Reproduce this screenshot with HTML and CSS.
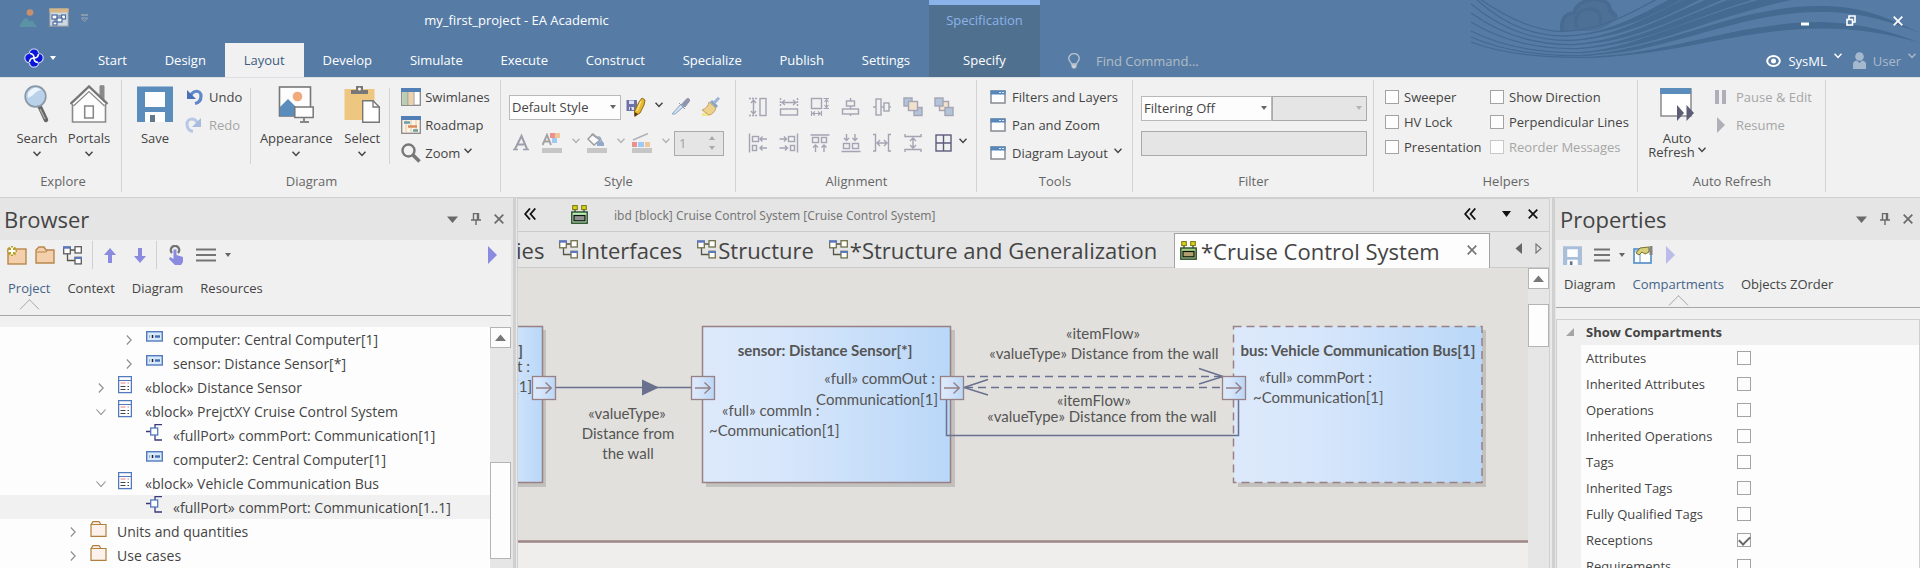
FILE: index.html
```html
<!DOCTYPE html>
<html lang="en">
<head>
<meta charset="utf-8">
<title>my_first_project - EA Academic</title>
<link rel="stylesheet" href="styles.css">
</head>
<body>
<svg class="defs" width="0" height="0" aria-hidden="true">
  <defs>
    <linearGradient id="nodeFill"><stop offset="0" stop-color="#dce9fb"/><stop offset="0.3" stop-color="#d8e7fb"/><stop offset="1" stop-color="#b9d7f8"/></linearGradient>
    <symbol id="chev" viewBox="0 0 8 6"><path d="M0.5 0.8 4 4.4 7.5 0.8" fill="none" stroke="currentColor" stroke-width="1.5"/></symbol>
    <symbol id="tri" viewBox="0 0 6 4"><path d="M0 0H6L3 4Z" fill="currentColor"/></symbol>
    <symbol id="bigtri" viewBox="0 0 11 7"><path d="M0 0.5H11L5.500 7Z" fill="currentColor"/></symbol>
    <symbol id="pin" viewBox="0 0 10 12"><path d="M2.500 0.500H7.500V6.500M2.500 0V6.500M6.500 0V6.500M0 7H10M5 7V12" fill="none" stroke="currentColor" stroke-width="1.400"/></symbol>
    <symbol id="cross" viewBox="0 0 10 10"><path d="M0.700 0.700 9.300 9.300M9.300 0.700 0.700 9.300" fill="none" stroke="currentColor" stroke-width="1.700"/></symbol>
    <symbol id="window" viewBox="0 0 16 14"><rect x="1" y="1" width="14" height="12" fill="#fcfdfe" stroke="#858b93" stroke-width="1.500"/><rect x="0.500" y="0.500" width="15" height="4" fill="#5788bb"/><path d="M9 2.500h2M12 2.500h2" stroke="#dce8f4"/></symbol>
    <symbol id="expand" viewBox="0 0 6 10"><path d="M0.800 0.500 5.200 5 0.800 9.500" fill="none" stroke="#8c8c8c" stroke-width="1.100"/></symbol>
    <symbol id="collapse" viewBox="0 0 10 6"><path d="M0.500 0.500 5 5.500 9.500 0.500" fill="none" stroke="#8c8c8c" stroke-width="1.100"/></symbol>
    <symbol id="part" viewBox="0 0 17 11"><rect x="0.700" y="0.700" width="15.600" height="9.300" fill="#d9e9fc" stroke="#5379bd" stroke-width="1.400"/><path d="M3.500 4v3" stroke="#98b4de"/><path d="M6.500 4v3" stroke="#222" stroke-width="1.500"/><path d="M9 5.500h5" stroke="#456db0" stroke-width="2.400"/></symbol>
    <symbol id="block" viewBox="0 0 14 18"><rect x="0.600" y="0.600" width="12.800" height="16" fill="#fff" stroke="#5379bd" stroke-width="1.300"/><path d="M1 4.500h12" stroke="#5379bd"/><path d="M2.500 7h5M9.500 7h1.500" stroke="#e88080" stroke-width="1.200"/><path d="M2.500 10.500h5M9.500 10.500h1.500M2.500 13.500h5M9.500 13.500h1.500" stroke="#444" stroke-width="1.200"/></symbol>
    <symbol id="port" viewBox="0 0 17 17"><path d="M16 0.700H9V16H16M0 7.500H5" fill="none" stroke="#38387a" stroke-width="1.300"/><rect x="4.700" y="4" width="7" height="7" fill="#fff" stroke="#5379bd" stroke-width="1.300"/></symbol>
    <symbol id="folder" viewBox="0 0 17 16"><path d="M1 15.300V3.500L3 0.700H9L11 3.500H16V15.300Z" fill="#fdf1ec" stroke="#b0803c" stroke-width="1.200"/><path d="M1 3.500H11" stroke="#b0803c"/></symbol>
    <symbol id="bigfolder" viewBox="0 0 20 18"><path d="M1 17V4L4 1H9L11 4H19V17Z" fill="#f3cfab" stroke="#b8864c" stroke-width="1.400"/><path d="M2 6H11L13 4" fill="none" stroke="#b8864c"/></symbol>
    <symbol id="struct" viewBox="0 0 19 19"><path d="M7 4H12M4.500 8V14.500H12" fill="none" stroke="#555548" stroke-width="1.300"/><g fill="#fff" stroke="var(--line)" stroke-width="1.300"><rect x="0.700" y="1.200" width="6.600" height="6.600"/><rect x="12" y="0.700" width="6.300" height="6.300"/><rect x="12" y="11.300" width="6.300" height="6.600"/></g><path d="M0 1.500H8" stroke="#5a78c0" stroke-width="2.400"/><path d="M11.500 12H19" stroke="#5a78c0" stroke-width="2"/></symbol>
    <symbol id="robot" viewBox="0 0 17 19"><path d="M4 4V11M13 4V8" stroke="#333" stroke-width="1.200"/><rect x="0.800" y="7" width="15.400" height="11.200" fill="var(--body)" stroke="#2c4a2c" stroke-width="1.400"/><rect x="3" y="10.500" width="11" height="5.300" fill="var(--core)" stroke="#111" stroke-width="1.200"/><rect x="1.700" y="0.600" width="4.600" height="4" fill="#d8d414" stroke="#77750a"/><rect x="10.700" y="0.600" width="4.600" height="4" fill="#d8d414" stroke="#77750a"/></symbol>
    <symbol id="dblleft" viewBox="0 0 12 12"><path d="M6 0.500 1.200 6 6 11.500M11.300 0.500 6.500 6 11.300 11.500" fill="none" stroke="#111" stroke-width="1.800"/></symbol>
    <symbol id="lines" viewBox="0 0 20 14" preserveAspectRatio="none"><path d="M0 1.500H20M0 7H20M0 12.500H20" stroke="#747474" stroke-width="2.200"/></symbol>
    <symbol id="play" viewBox="0 0 9 18"><path d="M0 0 9 9 0 18Z" fill="currentColor"/></symbol>
    <symbol id="floppy" viewBox="0 0 36 36"><path d="M0 0.500H36V36H0Z" fill="currentColor"/><path d="M8 6H28V21H8ZM8 26H28V36H8Z" fill="#fdfdfd"/><path d="M13 29H18V36H13Z" fill="#61798a"/></symbol>
    <symbol id="port-box" viewBox="0 0 26 26"><rect x="1.500" y="1.500" width="23" height="23" fill="url(#nodeFill)" stroke="#988084" stroke-width="1.300"/><path d="M5 13H20M14.500 7.500 20.300 13 14.500 18.500" fill="none" stroke="#988084" stroke-width="1.400"/></symbol>
  </defs>
</svg>

<header class="titlebar">
  <svg class="waves" viewBox="0 0 450 64" aria-hidden="true">
    <path d="M90 31C89 18 94 12 103 12C106-6 140-6 141 6C143 12 147 11 148 17C142 24 130 31 118 31Z" fill="#4d7097"/>
    <g fill="none" stroke="#486b92" stroke-width="3.500"><path d="M92 31C91 19 96 13 104 13C108-3 134-4 139 6L140 11L146 17"/><path d="M107 28C101 12 118 5 127 11Q133 16 130 24" stroke-width="3"/></g>
    <g fill="none" stroke="#456a91" stroke-width="1.300">
      <path d="M10 -1C40 20 66 31 92 31.500C128 31 158 15 187 -1"/>
      <path d="M6 -1C40 30 70 36 96 36C134 35 165 18 205 -1"/>
      <path d="M1 4C40 36 74 40.500 100 40.500C142 39 180 17 215 -1"/>
      <path d="M1 13C40 41 78 45 104 44.500C150 42 190 20 240 -1"/>
      <path d="M1 22C40 46 82 49 108 48.500C158 46 210 18 262 -1"/>
      <path d="M1 31C40 51 86 53 112 52.500C162 50 225 16 300 -1"/>
      <path d="M1 37C40 54 86 56 112 55.500C170 52 230 26 290 14"/>
      <path d="M1 42C40 57 86 58 120 57.300C180 55 240 36 290 28"/>
    </g>
    <g fill="#456a91">
      <path d="M96 36C134 35 165 18 200 -1H212C175 20 140 35 96 36Z"/>
      <path d="M100 40.500C142 39 180 17 217 -1H231C190 20 145 40 100 40.500Z"/>
      <path d="M104 44.500C150 42 190 20 237 -1H254C200 22 155 44 104 44.500Z"/>
      <path d="M108 48.500C158 46 210 18 264 -1H285C220 18 170 47 108 48.500Z"/>
      <path d="M112 52.500C162 50 225 16 292 -1H326C235 18 180 51 112 52.500Z"/>
      <path d="M112 55.500C190 52 260 6 350 6C390 6 415 16 450 33C415 20 390 12 350 12C265 12 195 55 112 55.500Z"/>
      <path d="M120 57.300C190 56 270 22 350 22C390 23 420 31 450 43C420 34 390 28.500 350 28.500C270 29 200 57 120 57.300Z"/>
    </g>
  </svg>
  <div class="titlerow">
    <div class="quick">
      <svg width="18" height="18" viewBox="0 0 18 18"><circle cx="11" cy="3.500" r="3.300" fill="#c98f6c"/><path d="M0 18C3 12 5 9 8 9L11 13L13 11L18 18Z" fill="#5b93a4"/></svg>
      <svg width="20" height="19" viewBox="0 0 20 19"><rect x="0.700" y="0.700" width="18.600" height="17.600" fill="#ccd8e4" stroke="#8b949e" stroke-width="1.200"/><path d="M0.500 0.500h19v4h-19z" fill="#d6b684"/><g fill="#fff" stroke="#4a6c9c" stroke-width="1.200"><path d="M6 10v5M8 8h8"/><rect x="3" y="7" width="5" height="4"/><rect x="12.500" y="7" width="4" height="4"/><rect x="8" y="10" width="5" height="4"/><rect x="4" y="14" width="4" height="3"/></g></svg>
      <svg width="7" height="8" viewBox="0 0 7 8"><path d="M0 1h7" stroke="#9aa5ae" stroke-width="1.500"/><path d="M0.500 4h6L3.500 7.500z" fill="none" stroke="#9aa5ae"/></svg>
    </div>
    <h1 class="apptitle">my_first_project - EA Academic</h1>
  </div>
  <div class="context"><span class="ctxlabel">Specification</span><button class="tab">Specify</button></div>
  <div class="winbtns">
    <button aria-label="Minimize"><svg width="8" height="10" viewBox="0 0 8 10"><path d="M0 8h8" stroke="#fff" stroke-width="3"/></svg></button>
    <button aria-label="Restore"><svg width="10" height="11" viewBox="0 0 10 11"><path d="M3 4V1H9V7H7" fill="none" stroke="#fff" stroke-width="1.600"/><rect x="1" y="4.500" width="5.500" height="5.500" fill="none" stroke="#fff" stroke-width="1.600"/></svg></button>
    <button aria-label="Close"><svg width="10" height="10"><use href="#cross"/></svg></button>
  </div>
  <button class="appmenu" aria-label="Application menu">
    <svg width="20" height="20" viewBox="0 0 20 20"><g fill="#0a16d8" stroke="#c4ccf4" stroke-width="1.200"><circle cx="10" cy="5.500" r="4.700"/><circle cx="10" cy="14.500" r="4.700"/><circle cx="5.500" cy="10" r="4.700"/><circle cx="14.500" cy="10" r="4.700"/></g><circle cx="10" cy="10" r="6.500" fill="#0a16d8"/><path d="M6 5.500C10 6 10 8 10 10C10 12 10 14 14 14.500M14.500 6C14 10 12 10 10 10C8 10 6 10 5.500 14" fill="none" stroke="#fff" stroke-width="1.700"/></svg>
    <svg width="6" height="4"><use href="#tri"/></svg>
  </button>
  <nav class="tabs">
    <button class="tab">Start</button><button class="tab">Design</button><button class="tab active">Layout</button><button class="tab">Develop</button><button class="tab">Simulate</button><button class="tab">Execute</button><button class="tab">Construct</button><button class="tab">Specialize</button><button class="tab">Publish</button><button class="tab">Settings</button>
  </nav>
  <div class="cmdrow">
    <svg width="12" height="16" viewBox="0 0 12 16"><path d="M3.500 11C3.500 9 0.800 8.500 0.800 5.500A5.200 4.900 0 0 1 11.200 5.500C11.200 8.500 8.500 9 8.500 11Z" fill="none" stroke="#b9c3cd" stroke-width="1.400"/><path d="M3.500 11.500h5v2.500l-1.500 1.500h-2l-1.500-1.500z" fill="#c9ccd0"/></svg>
    <input class="find" type="text" placeholder="Find Command..." aria-label="Find Command">
    <button class="persp"><svg width="15" height="12" viewBox="0 0 15 12"><ellipse cx="7.500" cy="6" rx="6.300" ry="4.900" fill="none" stroke="#fff" stroke-width="2"/><circle cx="7.500" cy="6" r="2.500" fill="#fff"/></svg>SysML<svg class="up" width="8" height="6"><use href="#chev"/></svg></button>
    <button class="persp dim"><svg width="13" height="17" viewBox="0 0 13 17"><circle cx="6.500" cy="4.500" r="4.300" fill="#a5b9ce"/><path d="M0 17V12Q0 9 4 8.500L6.500 11L9 8.500Q13 9 13 12V17Z" fill="#a5b9ce"/></svg>User<svg class="up" width="8" height="6"><use href="#chev"/></svg></button>
  </div>
</header>

<section class="ribbon">
  <div class="group g-explore">
    <div class="body">
      <button class="big"><svg width="26" height="38" viewBox="0 0 26 38"><path d="M15 20 22 35" stroke="#666" stroke-width="4.500" stroke-linecap="round"/><path d="M16 24 21 34" stroke="#aaa" stroke-width="1.500"/><circle cx="11.500" cy="11.500" r="10.300" fill="#b9d2ea" stroke="#8b98a6" stroke-width="1.700"/><path d="M4 13A8 8 0 0 1 17 5C11 6 11 10 4 13Z" fill="#edf5fc"/></svg>Search<svg width="8" height="6"><use href="#chev"/></svg></button>
      <button class="big"><svg width="38" height="38" viewBox="0 0 38 38"><path d="M30 13V0.800H34V17" fill="#8a8a8a" stroke="#8a8a8a"/><path d="M2.500 19 19 3.500 35.500 19V37H2.500Z" fill="#fdfdfd"/><path d="M2.500 19V37H35.500V19" fill="none" stroke="#8a8a8a" stroke-width="1.600"/><path d="M0.500 19 19 1.500 37.500 19" fill="none" stroke="#777" stroke-width="2.400"/><path d="M3.500 21 19 6.500 34.500 21" fill="none" stroke="#888" stroke-width="1.200"/><rect x="14.700" y="21" width="8.600" height="12" fill="#fff" stroke="#858585" stroke-width="1.500"/></svg>Portals<svg width="8" height="6"><use href="#chev"/></svg></button>
    </div>
    <div class="glabel">Explore</div>
  </div>
  <div class="group g-diagram">
    <div class="body">
      <button class="big save"><svg class="blue" width="36" height="38"><use href="#floppy"/></svg>Save</button>
      <div class="small">
        <button><svg width="20" height="18" viewBox="0 0 20 18"><path d="M5 9C8 1 16 2 16 8C16 13 13 15 10 15.500" fill="none" stroke="#6288cc" stroke-width="3.200"/><path d="M2 2V11H11Z" fill="#4a70b8"/></svg>Undo</button>
        <button disabled><svg width="20" height="18" viewBox="0 0 20 18"><path d="M13 8C10 1 2 2 2 8C2 13 5 15 8 15.500" fill="none" stroke="#b7c7e6" stroke-width="3"/><path d="M16 2V11H7Z" fill="#a8bce0"/></svg>Redo</button>
      </div>
      <i class="vsep first"></i>
      <button class="big wide"><svg width="36" height="38" viewBox="0 0 36 38"><rect x="1.500" y="2" width="31" height="29" fill="#fdfdfd" stroke="#777" stroke-width="1.600"/><circle cx="19.500" cy="11.500" r="4.800" fill="#f0aa7c"/><path d="M2 31V22L10 14 20 24V31Z" fill="#5a8cbc"/><rect x="16.800" y="22" width="18.400" height="10.500" fill="#fdfdfd" stroke="#777" stroke-width="1.500"/><path d="M26 33V36M22 37H31" stroke="#888" stroke-width="2"/></svg>Appearance<svg width="8" height="6"><use href="#chev"/></svg></button>
      <button class="big select"><svg width="36" height="38" viewBox="0 0 36 38"><rect x="0.500" y="4" width="30" height="31" fill="#edc67f"/><path d="M7 9V5H12V1H19V5H24V9Z" fill="#777"/><circle cx="15.500" cy="4" r="1.500" fill="#fff"/><path d="M18.700 15.700H29L35.300 22V37.300H18.700Z" fill="#fff" stroke="#777" stroke-width="1.400"/><path d="M29 15.700V22H35.300" fill="none" stroke="#777" stroke-width="1.300"/></svg>Select<svg width="8" height="6"><use href="#chev"/></svg></button>
      <i class="vsep"></i>
      <div class="small">
        <button><svg width="20" height="18" viewBox="0 0 20 18"><rect x="0.700" y="0.700" width="18.600" height="16.600" fill="#fff" stroke="#888" stroke-width="1.300"/><path d="M1.500 4h5.500v13h-5.500z" fill="#b9ceb0"/><path d="M7.500 4h5v13h-5z" fill="#efd0a8"/><path d="M0 0h20v4H0z" fill="#527fb5"/><path d="M7 4v13M13 4v13" stroke="#999"/></svg>Swimlanes</button>
        <button><svg width="20" height="18" viewBox="0 0 20 18"><rect x="0.700" y="0.700" width="18.600" height="16.600" fill="#fdf3e4" stroke="#888" stroke-width="1.300"/><path d="M0 0h20v4H0z" fill="#527fb5"/><path d="M5 4v13M10 4v13M15 4v13" stroke="#d9c9b0"/><path d="M3 6.500h6M12 14.500h5" stroke="#6aa0a8" stroke-width="2.400"/><path d="M7 10.500h9" stroke="#d88a5a" stroke-width="2.400"/></svg>Roadmap</button>
        <button><svg width="20" height="20" viewBox="0 0 20 20"><circle cx="7.500" cy="7.500" r="6" fill="none" stroke="#777" stroke-width="2.400"/><path d="M12 12 18.500 18.500" stroke="#777" stroke-width="3.600"/></svg>Zoom<svg class="up" width="8" height="6"><use href="#chev"/></svg></button>
      </div>
    </div>
    <div class="glabel">Diagram</div>
  </div>
  <div class="group g-style">
    <div class="body rows">
      <div class="row">
        <span class="drop stylesel"><select aria-label="Style"><option>Default Style</option></select></span>
        <button class="ico" aria-label="Save style"><svg width="20" height="20" viewBox="0 0 20 20"><path d="M0.500 3H11V14H0.500Z" fill="#6d72a8"/><path d="M3 3.500H8V7H3ZM3 10H8V13H3Z" fill="#dfe2f4"/><path d="M4 10.500H5.500V13H4Z" fill="#4c5088"/><path d="M16 1 19 3 18 8 14 16 9 19 8.500 14 13 5Z" fill="#e8b92c" stroke="#8c6a1c"/><path d="M15 4 11 14" stroke="#f8e080" stroke-width="1.500"/><path d="M8.500 20V15L12 17Z" fill="#5a3410"/></svg></button>
        <button class="chevbtn" aria-label="More"><svg width="8" height="6"><use href="#chev"/></svg></button>
        <button class="ico" aria-label="Pick style"><svg width="20" height="20" viewBox="0 0 20 20"><path d="M1 17 10 7 13 9.500 4 17Z" fill="#cfe0ee" stroke="#8ea7c4"/><path d="M8 6 14 12M11 7 16 1.500Q19 1 18.500 4L14 10Z" fill="#8f93ac" stroke="#8f93ac"/></svg></button>
        <button class="ico" aria-label="Apply style"><svg width="20" height="20" viewBox="0 0 20 20"><path d="M1 16H10L8 19H1Z" fill="#f1e68c"/><path d="M1 13Q7 11 8 5L15 11Q13 17 8 18Z" fill="#ecd08c" stroke="#c4a468"/><path d="M10 4 16 10" stroke="#8aa4c4" stroke-width="3"/><path d="M13 6 18 0.800" stroke="#9fb4d4" stroke-width="3"/></svg></button>
      </div>
      <div class="row second">
        <button class="ico" aria-label="Font"><svg width="20" height="20" viewBox="0 0 20 20"><path d="M3 16 9.500 3 15 16M5.500 11.500H12" fill="none" stroke="#9d9dac" stroke-width="2"/><path d="M1 16.500H6M11 16.500H17" stroke="#9d9dac" stroke-width="1.500"/></svg></button>
        <button class="ico" aria-label="Font colour"><svg width="20" height="20" viewBox="0 0 20 20"><path d="M0.500 12 5 2 9 12M2 8.500H8" fill="none" stroke="#a3a3a3" stroke-width="2"/><path d="M8 0h5v5H8z" fill="#eb9090"/><path d="M13 0h5v5h-5z" fill="#f1c79a"/><path d="M10 5h5v5h-5z" fill="#9ccaf5"/><path d="M0 15h20v5H0z" fill="#c6c6c6"/></svg></button>
        <button class="chevbtn off" aria-label="More"><svg width="8" height="6"><use href="#chev"/></svg></button>
        <button class="ico" aria-label="Fill colour"><svg width="20" height="20" viewBox="0 0 20 20"><path d="M1 6 6 1 13 7 7 12Z" fill="#fafafa" stroke="#9b9b9b" stroke-width="1.400"/><path d="M4 1 11 6" stroke="#9b9b9b"/><path d="M10 3C16 3 13 7 17 10V13H10V9L14 8Z" fill="#93a9cb"/><path d="M0 15h20v5H0z" fill="#c6c6c6"/></svg></button>
        <button class="chevbtn off" aria-label="More"><svg width="8" height="6"><use href="#chev"/></svg></button>
        <button class="ico" aria-label="Line colour"><svg width="20" height="20" viewBox="0 0 20 20"><path d="M1 7 16 0.500" stroke="#b0b0b8" stroke-width="1.500"/><path d="M0 9h5v5H0z" fill="#eb9090"/><path d="M6 9h6v5H6z" fill="#9ccaf5"/><path d="M13 9h5v5h-5z" fill="#f1c79a"/><path d="M0 15h20v5H0z" fill="#c6c6c6"/></svg></button>
        <button class="chevbtn off" aria-label="More"><svg width="8" height="6"><use href="#chev"/></svg></button>
        <span class="spin"><input type="text" value="1" disabled aria-label="Line width"><svg width="6" height="14" viewBox="0 0 6 14"><path d="M0 4 3 0 6 4ZM0 10 3 14 6 10Z" fill="#aaa"/></svg></span>
      </div>
    </div>
    <div class="glabel">Style</div>
  </div>
  <div class="group g-align">
    <div class="body rows">
      <div class="alignrow">
        <button aria-label="Same height"><svg width="20" height="20" viewBox="0 0 20 20"><path d="M1 1.500H9M1 18.500H9" stroke-dasharray="2 1"/><path d="M5.500 3V17M3 6 5.500 3 8 6M3 14 5.500 17 8 14"/><rect x="12" y="1.500" width="6" height="17"/></svg></button>
        <button aria-label="Same width"><svg width="20" height="20" viewBox="0 0 20 20"><path d="M1.500 1V9M18.500 1V9" stroke-dasharray="2 1"/><path d="M3 5.500H17M6 3 3 5.500 6 8M14 3 17 5.500 14 8"/><rect x="1.500" y="12" width="17" height="6"/></svg></button>
        <button aria-label="Same size"><svg width="20" height="20" viewBox="0 0 20 20"><rect x="1.500" y="1.500" width="10" height="10"/><path d="M13.500 1.500H19M13.500 11.500H19M16.500 2.500V10.500M14.500 5 16.500 2.500 18.500 5M14.500 8 16.500 10.500 18.500 8M1.500 14V19M11.500 14V19M2.500 16.500H10.500M5 14.500 2.500 16.500 5 18.500M8 14.500 10.500 16.500 8 18.500" stroke-width="1.100"/></svg></button>
        <button aria-label="Centre vertically"><svg width="20" height="20" viewBox="0 0 20 20"><path d="M9.500 1V19"/><rect x="5.500" y="4" width="8" height="5" fill="#f1f1f1"/><rect x="1.500" y="12" width="16" height="5" fill="#f1f1f1"/></svg></button>
        <button aria-label="Centre horizontally"><svg width="20" height="20" viewBox="0 0 20 20"><path d="M1 10H19"/><rect x="4" y="2" width="5" height="16" fill="#f1f1f1"/><rect x="12" y="6" width="5" height="8" fill="#f1f1f1"/></svg></button>
        <button aria-label="Bring to top"><svg width="20" height="20" viewBox="0 0 20 20"><rect x="1" y="1" width="8" height="8" fill="#b2c4da"/><rect x="11" y="10.500" width="8" height="8" fill="#b2c4da"/><rect x="5.500" y="4.500" width="9" height="9" fill="#f0e2cc"/></svg></button>
        <button aria-label="Send to bottom"><svg width="20" height="20" viewBox="0 0 20 20"><rect x="5.500" y="4.500" width="9" height="9" fill="#f0e2cc"/><rect x="1" y="1" width="8" height="8" fill="#b2c4da"/><rect x="11" y="10.500" width="8" height="8" fill="#b2c4da"/></svg></button>
      </div>
      <div class="alignrow second">
        <button aria-label="Align left"><svg width="20" height="20" viewBox="0 0 20 20"><path d="M1.500 0.500V19.500M12 6H19M14.500 3.500 12 6 14.500 8.500M12 15H19M14.500 12.500 12 15 14.500 17.500"/><rect x="4.500" y="3.500" width="6" height="5"/><rect x="4.500" y="12.500" width="4" height="5"/></svg></button>
        <button aria-label="Align right"><svg width="20" height="20" viewBox="0 0 20 20"><path d="M18.500 0.500V19.500M0.500 6H7M5 3.500 7.500 6 5 8.500M0.500 15H8M6 12.500 8.500 15 6 17.500"/><rect x="9.500" y="3.500" width="6" height="5"/><rect x="11.500" y="12.500" width="4" height="5"/></svg></button>
        <button aria-label="Align top"><svg width="20" height="20" viewBox="0 0 20 20"><path d="M0.500 2H19.500M5.500 12V19M3 14.500 5.500 12 8 14.500M14 12V19M11.500 14.500 14 12 16.500 14.500"/><rect x="2.500" y="4.500" width="6" height="5"/><rect x="11.500" y="4.500" width="5" height="5"/></svg></button>
        <button aria-label="Align bottom"><svg width="20" height="20" viewBox="0 0 20 20"><path d="M0.500 18.500H19.500M5.500 1V7M3 5 5.500 7.500 8 5M14 1V7M11.500 5 14 7.500 16.500 5"/><rect x="2.500" y="10.500" width="6" height="5"/><rect x="11.500" y="10.500" width="6" height="5"/></svg></button>
        <button aria-label="Space across"><svg width="20" height="20" viewBox="0 0 20 20"><path d="M1 1.500H3.500V18H1M19 1.500H16.500V18H19M5 10H15M8 7 5 10 8 13M12 7 15 10 12 13"/></svg></button>
        <button aria-label="Space down"><svg width="20" height="20" viewBox="0 0 20 20"><path d="M2 1V3.500H18V1M2 19V16.500H18V19M10 5V15M7 8 10 5 13 8M7 12 10 15 13 12"/></svg></button>
        <button class="dark" aria-label="Auto layout"><svg width="20" height="20" viewBox="0 0 20 20"><rect x="2" y="2" width="15" height="16"/><path d="M9.500 2V18M2 10H17"/></svg></button>
        <button class="chevbtn" aria-label="More"><svg width="8" height="6"><use href="#chev"/></svg></button>
      </div>
    </div>
    <div class="glabel">Alignment</div>
  </div>
  <div class="group g-tools">
    <div class="body">
      <div class="small">
        <button><svg width="16" height="14"><use href="#window"/></svg>Filters and Layers</button>
        <button><svg width="16" height="14"><use href="#window"/></svg>Pan and Zoom</button>
        <button><svg width="16" height="14"><use href="#window"/></svg>Diagram Layout<svg class="up" width="8" height="6"><use href="#chev"/></svg></button>
      </div>
    </div>
    <div class="glabel">Tools</div>
  </div>
  <div class="group g-filter">
    <div class="body rows">
      <div class="row">
        <span class="drop f1"><select aria-label="Filtering"><option>Filtering Off</option></select></span>
        <span class="drop off f2"><select disabled aria-label="Filter value"><option></option></select></span>
      </div>
      <input class="ftext" type="text" disabled aria-label="Filter text">
    </div>
    <div class="glabel">Filter</div>
  </div>
  <div class="group g-helpers">
    <div class="body checks">
      <label><input type="checkbox">Sweeper</label><label><input type="checkbox">Show Direction</label>
      <label><input type="checkbox">HV Lock</label><label><input type="checkbox">Perpendicular Lines</label>
      <label><input type="checkbox">Presentation</label><label class="off"><input type="checkbox" disabled>Reorder Messages</label>
    </div>
    <div class="glabel">Helpers</div>
  </div>
  <div class="group g-refresh">
    <div class="body">
      <button class="big refresh"><svg width="36" height="38" viewBox="0 0 36 38"><rect x="2" y="4" width="30" height="27" fill="#fff" stroke="#8b8b8b" stroke-width="1.500"/><path d="M1 3h31v6H1z" fill="#5a8cbc"/><path d="M18 20 25 28 18 36ZM27.500 20 35 28 27.500 36Z" fill="#5d5d76"/></svg>Auto<span>Refresh<svg class="up" width="8" height="6"><use href="#chev"/></svg></span></button>
      <div class="small">
        <button disabled><svg width="14" height="14" viewBox="0 0 14 14"><path d="M3 0v14M10 0v14" stroke="#b0aeb9" stroke-width="4"/></svg>Pause &amp; Edit</button>
        <button disabled><svg width="14" height="16" viewBox="0 0 14 16"><path d="M3 0 11 8 3 16Z" fill="#b0aeb9"/></svg>Resume</button>
      </div>
    </div>
    <div class="glabel">Auto Refresh</div>
  </div>
</section>

<main class="work">
  <section class="panel browser">
    <div class="phead"><h2>Browser</h2><button aria-label="Menu"><svg width="11" height="7"><use href="#bigtri"/></svg></button><button aria-label="Pin"><svg width="10" height="12"><use href="#pin"/></svg></button><button aria-label="Close"><svg width="10" height="10"><use href="#cross"/></svg></button></div>
    <div class="tools">
      <button aria-label="New package"><svg width="20" height="20" viewBox="0 0 20 20"><rect x="1" y="4" width="18" height="15" fill="#f3cfab" stroke="#b8864c" stroke-width="1.400"/><path d="M5 1V11M0 6H10M1.500 2.500 8.500 9.500M8.500 2.500 1.500 9.500" stroke="#b3a01c" stroke-width="2"/><path d="M5 2.500V9.500M1.500 6H8.500" stroke="#fff" stroke-width="2"/></svg></button>
      <button aria-label="Open package"><svg width="20" height="18"><use href="#bigfolder"/></svg></button>
      <button class="dgm" aria-label="New diagram"><svg width="19" height="19"><use href="#struct"/></svg></button>
      <i class="tsep"></i>
      <button aria-label="Move up"><svg width="12" height="15" viewBox="0 0 12 15"><path d="M6 0 12 7H8V15H4V7H0Z" fill="#8a8ae0"/></svg></button>
      <button aria-label="Move down"><svg width="12" height="15" viewBox="0 0 12 15"><path d="M6 15 12 8H8V0H4V8H0Z" fill="#8a8ae0"/></svg></button>
      <i class="tsep"></i>
      <button aria-label="Select"><svg width="16" height="20" viewBox="0 0 16 20"><path d="M4 8A4.200 4.200 0 1 1 10 8" fill="none" stroke="#747474" stroke-width="2.400"/><path d="M5.500 4.500H8.500V10L15 12V17L13 20H7L1 14 2 12 5.500 14Z" fill="#8a8ae0"/></svg></button>
      <button class="menu" aria-label="Options"><svg width="20" height="14"><use href="#lines"/></svg><svg width="6" height="4"><use href="#tri"/></svg></button>
      <button class="next" aria-label="More"><svg width="9" height="18"><use href="#play"/></svg></button>
    </div>
    <nav class="ptabs"><button class="on">Project</button><button>Context</button><button>Diagram</button><button>Resources</button></nav>
    <div class="treewrap">
      <ul class="tree">
        <li class="l2"><svg class="tw" width="6" height="10"><use href="#expand"/></svg><svg class="ti" width="17" height="11"><use href="#part"/></svg>computer: Central Computer[1]</li>
        <li class="l2"><svg class="tw" width="6" height="10"><use href="#expand"/></svg><svg class="ti" width="17" height="11"><use href="#part"/></svg>sensor: Distance Sensor[*]</li>
        <li class="l1"><svg class="tw" width="6" height="10"><use href="#expand"/></svg><svg class="ti" width="14" height="18"><use href="#block"/></svg>«block» Distance Sensor</li>
        <li class="l1"><svg class="tw" width="10" height="6"><use href="#collapse"/></svg><svg class="ti" width="14" height="18"><use href="#block"/></svg>«block» PrejctXY Cruise Control System</li>
        <li class="l2"><i class="tw"></i><svg class="ti" width="17" height="17"><use href="#port"/></svg>«fullPort» commPort: Communication[1]</li>
        <li class="l2"><i class="tw"></i><svg class="ti" width="17" height="11"><use href="#part"/></svg>computer2: Central Computer[1]</li>
        <li class="l1"><svg class="tw" width="10" height="6"><use href="#collapse"/></svg><svg class="ti" width="14" height="18"><use href="#block"/></svg>«block» Vehicle Communication Bus</li>
        <li class="l2 sel"><i class="tw"></i><svg class="ti" width="17" height="17"><use href="#port"/></svg>«fullPort» commPort: Communication[1..1]</li>
        <li class="l0"><svg class="tw" width="6" height="10"><use href="#expand"/></svg><svg class="ti" width="17" height="16"><use href="#folder"/></svg>Units and quantities</li>
        <li class="l0"><svg class="tw" width="6" height="10"><use href="#expand"/></svg><svg class="ti" width="17" height="16"><use href="#folder"/></svg>Use cases</li>
      </ul>
      <div class="scroll tall"><button aria-label="Scroll up"><svg width="11" height="7" viewBox="0 0 11 7"><path d="M0 7 5.500 0.500 11 7Z" fill="#777"/></svg></button><i></i></div>
    </div>
  </section>
  <i class="splitter"></i>
  <section class="doc">
    <div class="dochead"><button aria-label="Collapse"><svg width="12" height="12"><use href="#dblleft"/></svg></button><svg class="rb" width="17" height="19"><use href="#robot"/></svg><span>ibd [block] Cruise Control System [Cruise Control System]</span>
      <button aria-label="Show list"><svg width="12" height="12"><use href="#dblleft"/></svg></button><button aria-label="Menu"><svg width="9" height="6" viewBox="0 0 6 4"><use href="#tri"/></svg></button><button class="close" aria-label="Close"><svg width="10" height="10"><use href="#cross"/></svg></button></div>
    <div class="doctabs">
      <button class="cut">ies</button>
      <button><svg width="19" height="19"><use href="#struct"/></svg>Interfaces</button>
      <button><svg width="19" height="19"><use href="#struct"/></svg>Structure</button>
      <button><svg width="19" height="19"><use href="#struct"/></svg>*Structure and Generalization</button>
      <button class="current"><svg class="rb2" width="17" height="19"><use href="#robot"/></svg>*Cruise Control System<svg class="x" width="10" height="10"><use href="#cross"/></svg></button>
      <span class="tabnav"><svg width="7" height="11" viewBox="0 0 7 11"><path d="M7 0V11L0.500 5.500Z" fill="#666"/></svg><svg width="7" height="11" viewBox="0 0 7 11"><path d="M1 1V10L6 5.500Z" fill="none" stroke="#777" stroke-width="1.200"/></svg></span>
    </div>
    <div class="canvaswrap">
      <svg class="canvas" width="100%" height="100%">
        <g transform="translate(-518 -268)">
          <rect x="500" y="541" width="4000" height="400" fill="#efeeec"/>
          <path d="M500 541.500H4500" stroke="#9c8686" stroke-width="2.500"/>
          <rect x="504" y="330" width="42" height="157" fill="#c3c1be"/><rect x="706" y="330" width="249" height="157" fill="#c3c1be"/><rect x="1238" y="330" width="248" height="157" fill="#c3c1be"/>
          <rect x="490" y="326.500" width="52.500" height="156" fill="url(#nodeFill)" stroke="#988084" stroke-width="1.500"/>
          <rect x="702.500" y="326.500" width="248" height="156" fill="url(#nodeFill)" stroke="#988084" stroke-width="1.500"/>
          <rect x="1233.500" y="326.500" width="248.500" height="156" fill="url(#nodeFill)" stroke="#988084" stroke-width="1.500" stroke-dasharray="8 5"/>
          <g fill="none" stroke="#69718f" stroke-width="1.500">
            <path d="M556 387.500H692M946.500 400V435.500H1238.500V400M988 379.500 964 387.500 988 395M1199 368.500 1223 376.500 1199 384"/>
            <path d="M967 376.500H1223M965 387.500H1221" stroke-dasharray="8 5"/>
          </g>
          <path d="M642 379.500 659 387.500 642 395.500Z" fill="#69718f"/>
          <use href="#port-box" x="531" y="375" width="26" height="26"/><use href="#port-box" x="690" y="375" width="26" height="26"/><use href="#port-box" x="939" y="375" width="26" height="26"/><use href="#port-box" x="1221" y="375" width="26" height="26"/>
          <g class="names"><text x="523" y="356" text-anchor="end">computer: Central Computer[1]</text><text x="825" y="356" text-anchor="middle">sensor: Distance Sensor[*]</text><text x="1358" y="356" text-anchor="middle">bus: Vehicle Communication Bus[1]</text></g>
          <g class="labels">
            <text x="530" y="372" text-anchor="end">«full» commOut :</text><text x="532" y="392" text-anchor="end">Communication[1]</text>
            <text x="627" y="419" text-anchor="middle">«valueType»</text><text x="628" y="439" text-anchor="middle">Distance from</text><text x="628" y="459" text-anchor="middle">the wall</text>
            <text x="935" y="384" text-anchor="end">«full» commOut :</text><text x="938" y="405" text-anchor="end">Communication[1]</text>
            <text x="722" y="416">«full» commIn :</text><text x="709" y="436">~Communication[1]</text>
            <text x="1103" y="339" text-anchor="middle">«itemFlow»</text><text x="1104" y="359" text-anchor="middle">«valueType» Distance from the wall</text>
            <text x="1094" y="406" text-anchor="middle">«itemFlow»</text><text x="1102" y="422" text-anchor="middle">«valueType» Distance from the wall</text>
            <text x="1259" y="383">«full» commPort :</text><text x="1253" y="403">~Communication[1]</text>
          </g>
        </g>
      </svg>
      <div class="scroll short"><button aria-label="Scroll up"><svg width="11" height="7" viewBox="0 0 11 7"><path d="M0 7 5.500 0.500 11 7Z" fill="#777"/></svg></button><i></i></div>
    </div>
  </section>
  <i class="splitter right"></i>
  <section class="panel props">
    <div class="phead"><h2>Properties</h2><button aria-label="Menu"><svg width="11" height="7"><use href="#bigtri"/></svg></button><button aria-label="Pin"><svg width="10" height="12"><use href="#pin"/></svg></button><button aria-label="Close"><svg width="10" height="10"><use href="#cross"/></svg></button></div>
    <div class="tools">
      <button class="pale" aria-label="Save"><svg width="19" height="19"><use href="#floppy"/></svg></button>
      <button class="menu" aria-label="Options"><svg width="16" height="14"><use href="#lines"/></svg><svg width="6" height="4"><use href="#tri"/></svg></button>
      <button aria-label="Edit properties"><svg width="20" height="18" viewBox="0 0 20 18"><rect x="1" y="3" width="17" height="14" fill="#fff" stroke="#5a92c8" stroke-width="1.700"/><path d="M1 5h17M7 5v12" stroke="#5a92c8"/><path d="M3 7 7 2 16 1V6L12 8 9 6 6 9Z" fill="#d8d07a" stroke="#77702c"/><path d="M18 0v9" stroke="#858585" stroke-width="3"/></svg></button>
      <button class="lilac" aria-label="Run"><svg width="9" height="18"><use href="#play"/></svg></button>
    </div>
    <nav class="ptabs"><button>Diagram</button><button class="on">Compartments</button><button>Objects ZOrder</button></nav>
    <div class="grid">
      <div class="ghead"><svg width="8" height="8" viewBox="0 0 8 8"><path d="M8 0V8H0Z" fill="#a5a5a5"/></svg>Show Compartments</div>
      <label>Attributes<input type="checkbox"></label>
      <label>Inherited Attributes<input type="checkbox"></label>
      <label>Operations<input type="checkbox"></label>
      <label>Inherited Operations<input type="checkbox"></label>
      <label>Tags<input type="checkbox"></label>
      <label>Inherited Tags<input type="checkbox"></label>
      <label>Fully Qualified Tags<input type="checkbox"></label>
      <label>Receptions<input type="checkbox" checked></label>
      <label>Requirements<input type="checkbox"></label>
    </div>
  </section>
</main>
</body>
</html>
```
FILE: styles.css
```css
* { box-sizing: border-box; }
html, body { height: 100%; }
body {
  margin: 0;
  display: flex;
  flex-direction: column;
  overflow: hidden;
  background: #e5e5e5;
  color: #444;
  font: 13px/18px "Open Sans", "Noto Sans", sans-serif;
}
svg { display: block; flex: none; }
.defs { position: absolute; }
button { border: 0; margin: 0; padding: 0; background: none; color: inherit; font: inherit; white-space: nowrap; }
input, select { font: inherit; color: inherit; margin: 0; }
h1, h2 { margin: 0; font-weight: 400; }

/* Title bar */
.titlebar {
  position: relative;
  flex: none;
  display: grid;
  grid-template-columns: 79px 850px 111px 1fr;
  grid-template-rows: 43px 34px;
  background: #567ca6;
  color: #fff;
}
.waves { position: absolute; right: 0; top: 0; width: 450px; height: 64px; }
.titlerow { grid-column: 1 / 3; display: flex; align-items: center; padding-bottom: 4px; }
.quick { width: 104px; padding: 0 0 4px 19px; display: flex; align-items: center; gap: 12px; }
.apptitle { flex: 1; text-align: center; font-size: 13px; }
.context { grid-column: 3; grid-row: 1 / 3; display: flex; flex-direction: column; border-top: 5px solid #8bb3ea; background: #50708f; }
.ctxlabel { flex: 1; padding-top: 6px; text-align: center; color: #8bb3ea; }
.context .tab { flex: none; height: 34px; }
.winbtns { position: relative; grid-column: 4; grid-row: 1; display: flex; justify-content: flex-end; align-items: center; gap: 37px; padding: 0 17px 2px 0; }
.appmenu { grid-column: 1; grid-row: 2; display: flex; align-items: center; gap: 6px; padding: 0 0 4px 24px; }
.tabs { grid-column: 2; grid-row: 2; display: flex; }
.tab { flex: 1 1 auto; padding-bottom: 1px; text-align: center; }
.tab.active { background: #f1f1f1; color: #3c5c80; }
.cmdrow { position: relative; grid-column: 4; grid-row: 2; display: flex; align-items: center; gap: 16px; padding: 1px 4px 0 28px; }
.find { flex: 1; min-width: 0; border: 0; padding: 0; background: none; outline: 0; }
.find::placeholder { color: #b3bcc4; opacity: 1; }
.persp { display: flex; align-items: center; gap: 7px; }
.persp.dim { color: #a9b9c9; margin-left: -5px; }
.up { margin-bottom: 5px; }
.persp .up { margin-bottom: 10px; }

/* Ribbon */
.ribbon { flex: none; display: flex; background: #f1f1f1; border-top: 1px solid #dcdfe4; border-bottom: 1px solid #cfcfcf; height: 121px; }
.group { position: relative; flex: none; display: flex; flex-direction: column; padding: 5px 0 7px; }
.group::after { content: ""; position: absolute; right: 0; top: 2px; bottom: 5px; width: 1px; background: #d3d3d3; }
.body { flex: 1; display: flex; align-items: flex-start; }
.glabel { text-align: center; color: #666; }
.g-explore { width: 122px; padding-left: 11px; padding-right: 7px; }
.g-diagram { width: 379px; }
.g-style { width: 235px; }
.g-align { width: 241px; }
.g-tools { width: 156px; }
.g-filter { width: 241px; }
.g-helpers { width: 264px; }
.g-refresh { width: 188px; }
.big { width: 52px; display: flex; flex-direction: column; align-items: center; padding-top: 2px; }
.big svg + svg, .big svg:last-child:not(:first-child) { margin-top: 4px; }
.big > svg:first-child { margin-bottom: 6px; }
.big.save { width: 54px; margin: 0 3px 0 6px; }
.big.wide { width: 80px; margin-left: 5px; }
.big.select { margin-right: -1px; }
.blue { color: #5a8cbc; }
.small { display: flex; flex-direction: column; }
.small button { display: flex; align-items: center; gap: 4px; height: 28px; }
.small button:disabled { color: #a6a6a6; }
.vsep { width: 1px; height: 76px; margin-top: 5px; margin-left: 2px; background: #d3d3d3; }
.vsep.first { margin-left: 8px; }
.g-diagram .vsep + .small { margin-left: 11px; }
.g-tools .body { padding-left: 13px; }
.g-tools .small button { gap: 6px; }
.body.rows { flex-direction: column; align-items: stretch; }
.row { display: flex; align-items: center; height: 26px; }
.g-style .rows { padding: 11px 0 0 8px; }
.second { margin-top: 10px; }
.ico { margin-left: 5px; }
.row .ico + .ico { margin-left: 10px; }
.chevbtn { padding: 0 0 4px 9px; }
.chevbtn.off { color: #b4b4b4; }
.row.second .chevbtn { padding-left: 10px; padding-right: 2px; }
.row .chevbtn + .ico { margin-left: 8px; }
.row.second .chevbtn + .ico { margin-left: 5px; }
.row.second .ico:first-child { margin-left: 3px; }
.drop { position: relative; display: block; height: 25px; }
.drop select { appearance: none; display: block; width: 100%; height: 100%; border: 1px solid #b9b9b9; border-radius: 0; background: #fdfdfd; padding: 0 0 0 2px; opacity: 1; }
.drop::after { content: ""; position: absolute; right: 5px; top: 10px; border: 3px solid transparent; border-top: 4px solid #666; border-bottom: 0; }
.drop.off select { background: #e5e5e5; border-color: #aaa; }
.drop.off::after { border-top-color: #b4b4b4; }
.stylesel { width: 112px; }
.spin { display: flex; align-items: center; width: 50px; height: 25px; margin-left: 2px; padding-right: 8px; border: 1px solid #aaa; background: #e5e5e5; }
.spin input { width: 30px; flex: 1; border: 0; padding: 0 0 0 4px; background: none; color: #a0a0a0; }
.g-align .rows { padding: 11px 0 0 12px; }
.alignrow { display: flex; align-items: center; gap: 11px; height: 26px; }
.alignrow svg { fill: none; stroke: #a4a4b4; stroke-width: 1.400; }
.alignrow .dark svg { stroke: #5c5c7c; }
.alignrow .chevbtn { padding-left: 0; margin-left: -6px; }
.alignrow .chevbtn svg { stroke: none; }
.g-filter .rows { padding: 12px 7px 0 8px; }
.f1 { width: 131px; }
.f2 { flex: 1; }
.ftext { width: 100%; height: 25px; margin-top: 10px; border: 1px solid #aaa; background: #e5e5e5; }
.checks { display: grid; grid-template-columns: 105px 1fr; grid-auto-rows: 25px; align-content: start; padding: 1px 0 0 11px; }
.checks label { display: flex; align-items: center; gap: 5px; height: 25px; white-space: nowrap; }
.checks .off { color: #a6a6a6; }
input[type="checkbox"] { appearance: none; flex: none; width: 14px; height: 14px; border: 1px solid #a3a3a3; background: #fdfdfd; display: grid; place-items: center; }
input[type="checkbox"]:disabled { border-color: #c8c8c8; }
input[type="checkbox"]:checked::before { content: ""; width: 9px; height: 5px; border: solid #666; border-width: 0 0 2px 2px; transform: translateY(-1px) rotate(-45deg); }
.big.refresh { width: 66px; margin-left: 6px; line-height: 14px; }
.big.refresh > svg:first-child { margin-bottom: 8px; }
.refresh span { display: flex; align-items: center; gap: 3px; }
.g-refresh .small { margin-left: 4px; }
.g-refresh .small button { gap: 8px; }

/* Work area */
.work { flex: 1; min-height: 0; display: grid; grid-template-columns: 511px 7px 1fr 7px 364px; }
.panel, .doc { min-width: 0; min-height: 0; display: flex; flex-direction: column; overflow: hidden; }
.panel { background: #f0f0f0; }
.phead { display: flex; align-items: center; gap: 13px; flex: none; height: 42px; padding: 0 7px 0 4px; background: #e5e5e5; color: #6a6a6a; }
.phead h2 { flex: 1; font-size: 22px; line-height: 30px; color: #444; }
.tools { display: flex; align-items: center; flex: none; height: 33px; gap: 8px; padding: 0 14px 3px 7px; }
.dgm { --line: #5c5c5c; }
.tsep { width: 1px; height: 28px; margin-left: 2px; background: #d0d0d0; }
.tools .tsep + button { margin-left: 3px; }
.tools .tsep + button + button { margin-left: 10px; }
.tools .menu.menu.menu { display: flex; align-items: center; gap: 9px; color: #666; margin-left: 4px; }
.next { margin-left: auto; color: #8a8ae0; }
.lilac { color: #bcbcea; margin-left: 5px; }
.pale { color: #a9bfd9; }
.ptabs { display: flex; align-items: center; gap: 17px; flex: none; height: 43px; margin-bottom: 11px; padding: 0 8px 12px; border-bottom: 1px solid #a6a6a6; }
.ptabs button { position: relative; }
.ptabs .on { color: #44648a; }
.ptabs .on::after { content: ""; position: absolute; left: 50%; bottom: -20px; width: 14px; height: 14px; margin-left: -7px; border: 1px solid #a6a6a6; border-width: 1px 0 0 1px; background: #f0f0f0; transform: rotate(45deg); clip-path: polygon(0 0, 100% 0, 0 100%); }
.treewrap { flex: 1; min-height: 0; display: flex; background: #fdfdfd; }
.tree { flex: 1; min-width: 0; margin: 0; padding: 0; list-style: none; overflow: hidden; font-size: 14px; }
.tree li { display: grid; grid-template-columns: 22px 27px 1fr; align-items: center; height: 24px; padding-top: 1px; white-space: nowrap; }
.tree .l0 { padding-left: 68px; }
.tree .l1 { padding-left: 96px; }
.tree .l2 { padding-left: 124px; }
.tree .sel { background: #f1f1f1; }
.tw { justify-self: start; margin-left: 2px; }
.tw[width="10"] { margin-left: 0; }
.ti { margin-bottom: 6px; }
.scroll { flex: none; width: 21px; background: #e6e6e6; display: flex; flex-direction: column; }
.scroll button { display: grid; place-items: center; height: 21px; border: 1px solid #b4b4b4; background: #fdfdfd; }
.scroll i { border: 1px solid #b4b4b4; background: #fdfdfd; }
.tall i { height: 97px; margin-top: 114px; }
.short i { height: 43px; margin-top: 15px; }
.splitter { border: solid #d0d0d0; border-width: 0 1px 0 3px; margin-left: 2px; background: #e9e9e9; }
.splitter.right { border-width: 0 3px 0 1px; margin: 0 1px 0 0; }

/* Document area */
.doc { background: #e5e5e5; border-top: 1px solid #cfcfcf; }
.dochead { display: flex; align-items: center; flex: none; height: 33px; gap: 26px; padding: 0 11px 2px 6px; border-bottom: 1px solid #cacaca; color: #111; }
.dochead span { flex: 1; color: #777; font: 12px/18px "Noto Sans", sans-serif; padding-top: 4px; }
.dochead .close { margin-left: -9px; }
.rb { margin-left: 9px; --body: #b4f0b4; --core: #909090; }
.doctabs { display: flex; align-items: stretch; flex: none; height: 36px; border-bottom: 1px solid #cacaca; font-size: 22px; line-height: 30px; --line: #70704c; }
.doctabs button { display: flex; align-items: center; gap: 2px; padding: 1px 15px 0 0; }
.doctabs .cut { margin-left: -2px; }
.doctabs svg { margin-bottom: 2px; }
.doctabs .current { flex: none; margin: 1px 0 -1px auto; width: 316px; gap: 4px; padding: 0 12px 0 5px; border: 1px solid #a3a3a3; border-bottom: 0; background: #fdfdfd; }
.current .x { margin-left: auto; color: #777; }
.rb2 { --body: #a0d080; --core: #b0a070; }
.tabnav { display: flex; align-items: center; gap: 13px; padding: 0 7px 0 25px; }
.canvaswrap { flex: 1; min-height: 0; display: flex; background: #e1e0dc; }
.canvas { flex: 1; min-width: 0; }
.canvas text { font-family: Lato, sans-serif; fill: #555; }
.names text { font-size: 15px; font-weight: 700; }
.labels text { font-size: 15px; }

/* Properties */
.props .ptabs { height: 35px; }
.grid { flex: 1; min-height: 0; overflow: hidden; border: 1px solid #cfcfcf; border-bottom: 0; background: #fdfdfd; }
.ghead { display: flex; align-items: center; gap: 12px; height: 25px; padding: 0 0 2px 9px; background: #f0f0f0; font-weight: 700; }
.grid label { display: grid; grid-template-columns: 151px auto; justify-content: start; align-items: center; height: 26px; border-left: 24px solid #f0f0f0; padding-left: 5px; }
```
